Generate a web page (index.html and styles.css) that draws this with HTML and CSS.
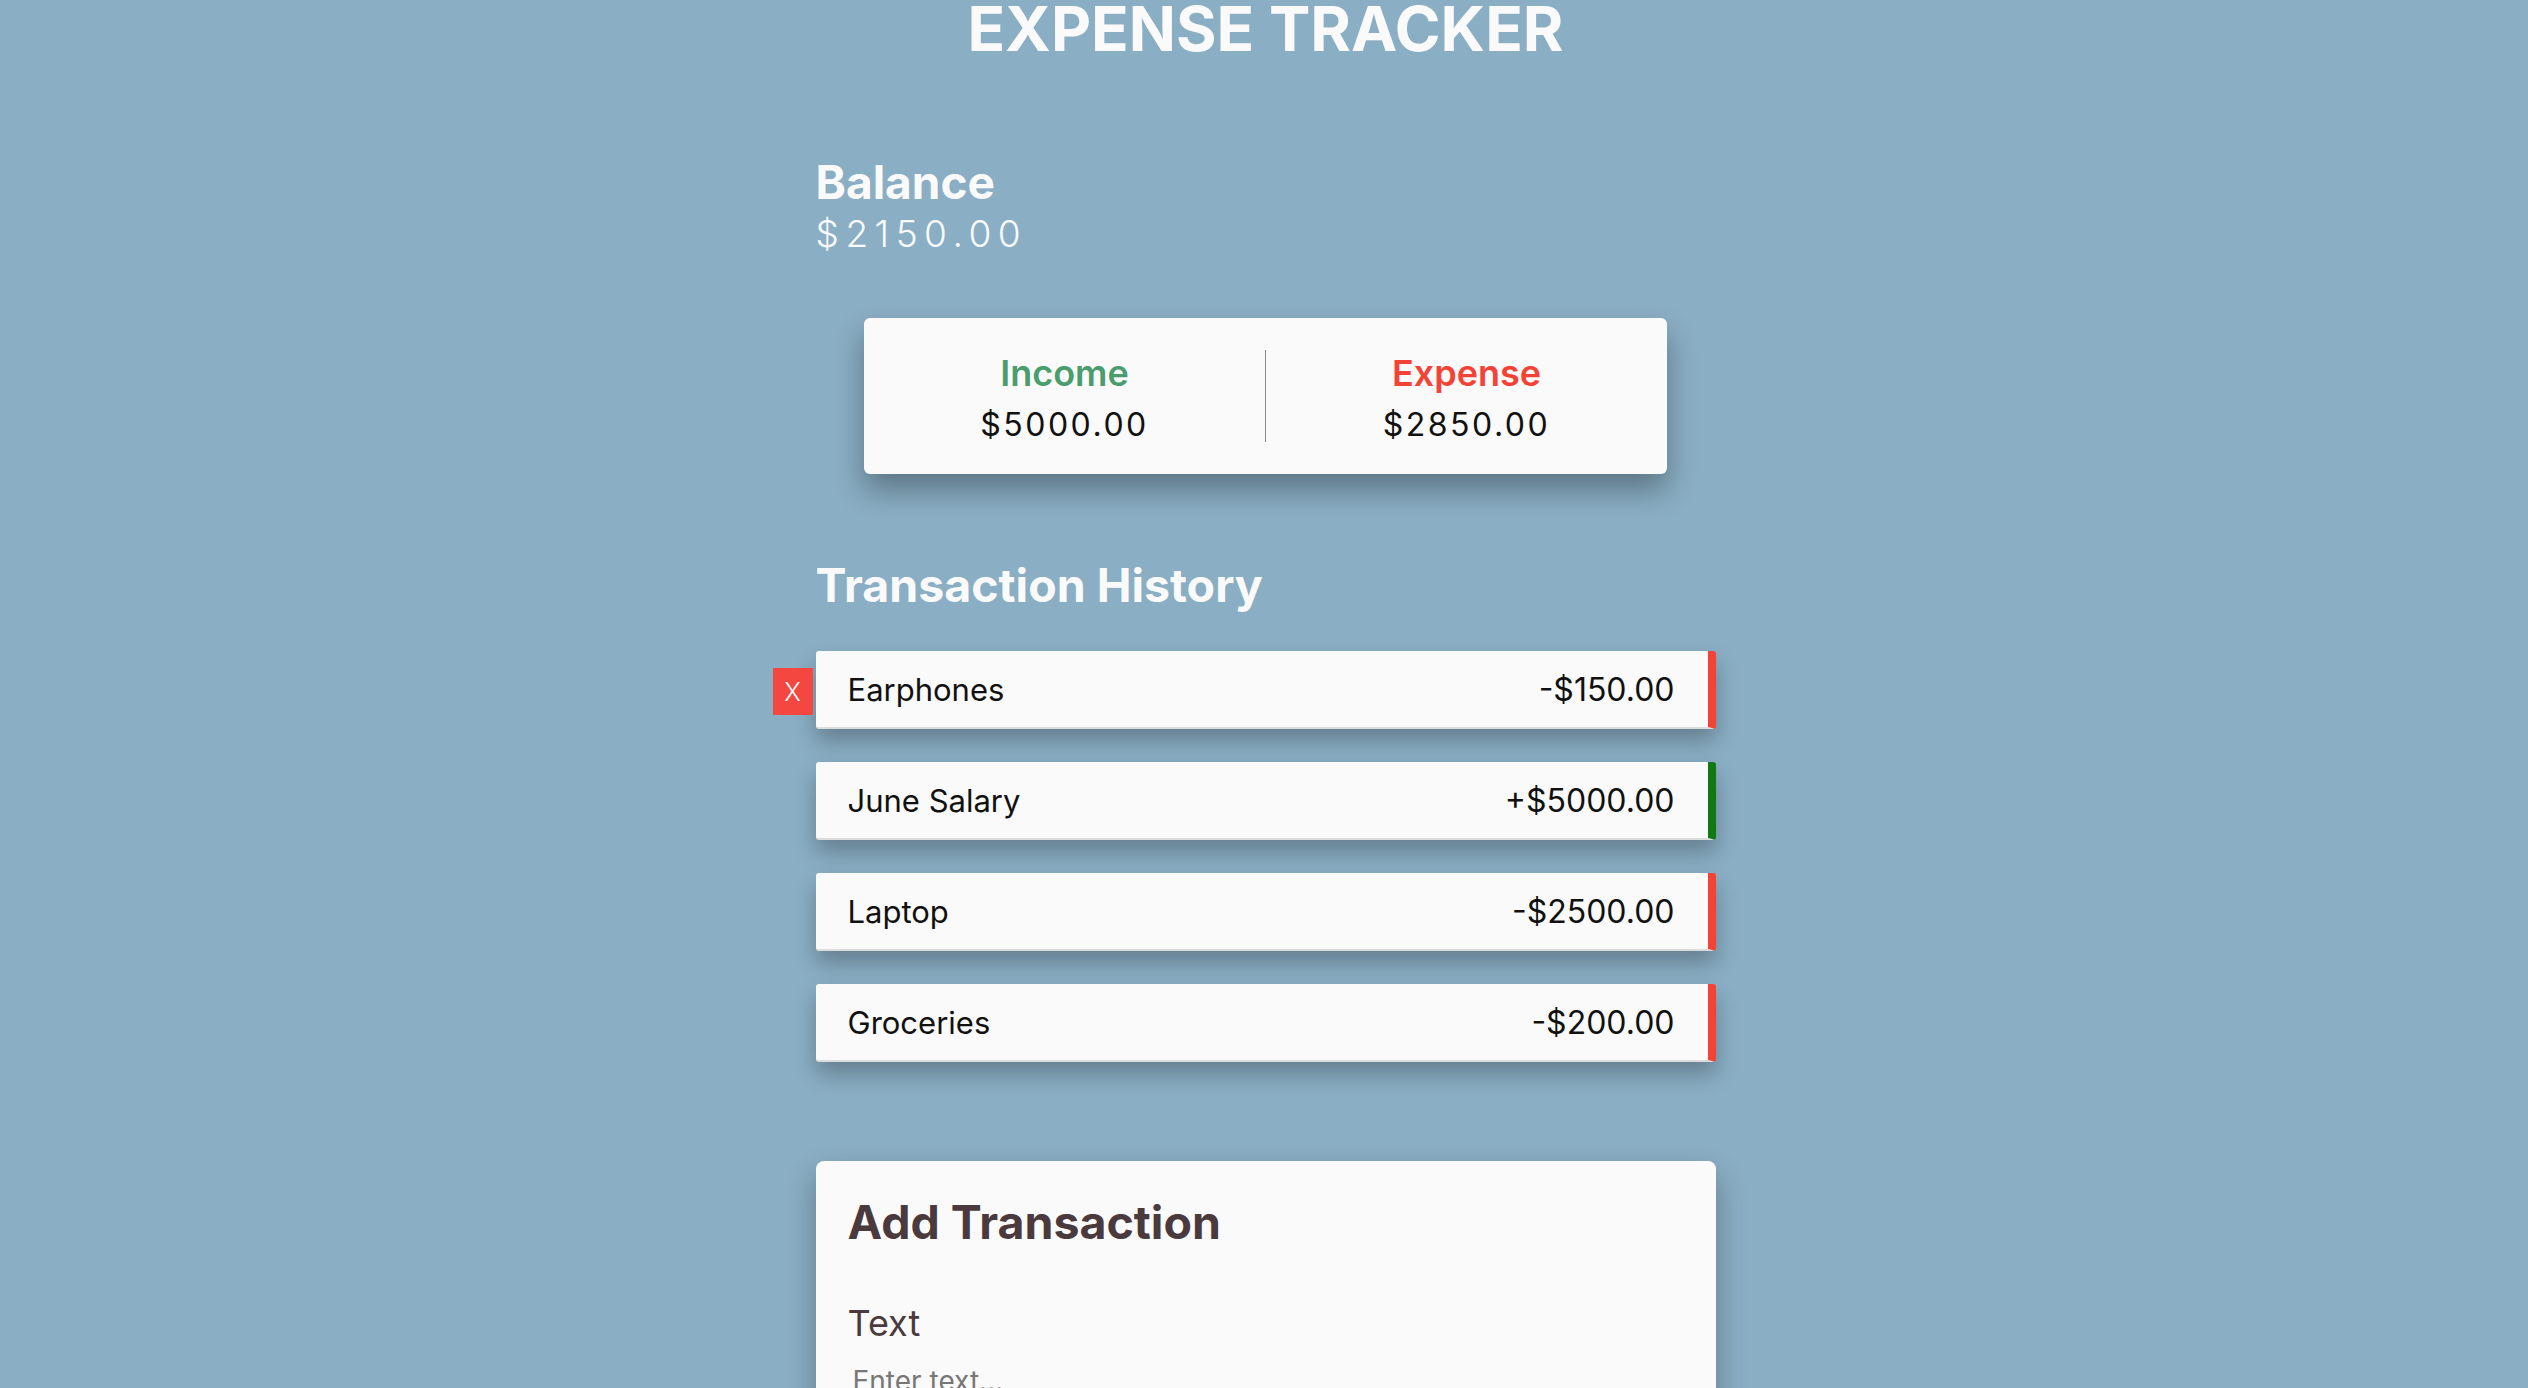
FILE: index.html
```html
<!DOCTYPE html>
<html lang="en">
<head>
<meta charset="utf-8">
<title>Expense Tracker</title>
<link rel="stylesheet" href="styles.css">
</head>
<body>
  <h1 class="title">EXPENSE TRACKER</h1>
  <div class="container">
    <h4 class="balance-label">Balance</h4>
    <p class="balance-amount">$2150.00</p>

    <div class="summary">
      <div class="summary-col">
        <h4 class="summary-label income">Income</h4>
        <p class="summary-value">$5000.00</p>
      </div>
      <div class="summary-col divided">
        <h4 class="summary-label expense">Expense</h4>
        <p class="summary-value">$2850.00</p>
      </div>
    </div>

    <h3 class="section-title">Transaction History</h3>
    <ul class="list">
      <li class="item minus">
        <button class="delete-btn">X</button>
        <span class="item-name">Earphones</span>
        <span class="item-amount">-$150.00</span>
      </li>
      <li class="item plus">
        <span class="item-name">June Salary</span>
        <span class="item-amount">+$5000.00</span>
      </li>
      <li class="item minus">
        <span class="item-name">Laptop</span>
        <span class="item-amount">-$2500.00</span>
      </li>
      <li class="item minus">
        <span class="item-name">Groceries</span>
        <span class="item-amount">-$200.00</span>
      </li>
    </ul>

    <form class="form-card">
      <h3 class="form-title">Add Transaction</h3>
      <label class="form-label" for="text">Text</label>
      <input class="form-input" id="text" type="text" placeholder="Enter text...">
    </form>
  </div>
</body>
</html>
```

FILE: styles.css
```css
* {
  box-sizing: border-box;
}

body {
  margin: 0;
  padding-left: 3px;
  background: #8aaec4;
  font-family: Inter, "Noto Sans", sans-serif;
  color: #fafafa;
  overflow: hidden;
}

.title {
  margin: 3px 0 0;
  font-size: 62px;
  line-height: 0.85;
  font-weight: 700;
  text-align: center;
  color: #fafafa;
}

.container {
  width: 900px;
  margin: 0 auto;
}

.balance-label {
  margin: 103px 0 0;
  font-size: 46px;
  line-height: 1;
  font-weight: 700;
}

.balance-amount {
  margin: 10px 0 0;
  font-size: 37px;
  line-height: 1;
  font-weight: 300;
  letter-spacing: 6.5px;
}

.summary {
  width: 803px;
  margin: 66px auto 0;
  padding: 32px 0;
  background: #fafafa;
  border-radius: 6px;
  display: flex;
  box-shadow: 0 16px 30px rgba(0, 0, 0, 0.33);
}

.summary-col {
  flex: 1;
  height: 92px;
  padding-top: 5px;
  display: flex;
  flex-direction: column;
  align-items: center;
  justify-content: center;
  gap: 18px;
}

.summary-col.divided {
  border-left: 1px solid #8a8a8a;
}

.summary-label {
  margin: 0;
  font-size: 36px;
  line-height: 1;
  font-weight: 600;
}

.summary-label.income {
  color: #4a9d6c;
}

.summary-label.expense {
  color: #f44336;
}

.summary-value {
  margin: 0;
  font-size: 32px;
  line-height: 1;
  color: #111;
  letter-spacing: 2.5px;
}

.section-title {
  margin: 88px 0 0;
  font-size: 46.5px;
  line-height: 1;
  font-weight: 700;
}

.list {
  list-style: none;
  margin: 43px 0 0;
  padding: 0;
  display: flex;
  flex-direction: column;
  gap: 33px;
}

.item {
  position: relative;
  height: 78px;
  background: #fafafa;
  border-radius: 3px;
  border-bottom: 2px solid #dcdcdc;
  border-right: 8px solid #f44336;
  padding: 0 33px 0 32px;
  display: flex;
  align-items: center;
  justify-content: space-between;
  color: #111;
  font-size: 32px;
  box-shadow: 0 12px 22px rgba(0, 0, 0, 0.27);
}

.item-name {
  font-size: 31px;
}

.item.plus {
  border-right-color: #0f7a12;
}

.delete-btn {
  position: absolute;
  left: -43px;
  top: 17px;
  width: 40px;
  height: 47px;
  border: none;
  padding: 0;
  background: #f44740;
  color: #fff;
  font-family: Inter, "Noto Sans", sans-serif;
  font-size: 25px;
  font-weight: 300;
}

.form-card {
  margin: 99px 0 0;
  padding: 38px 32px 40px;
  background: #fafafa;
  border-radius: 8px;
  box-shadow: 0 14px 30px rgba(0, 0, 0, 0.3);
  min-height: 400px;
}

.form-title {
  margin: 0;
  font-size: 46.5px;
  line-height: 1;
  font-weight: 700;
  color: #4a3a3d;
}

.form-label {
  display: block;
  margin-top: 59px;
  font-size: 36px;
  line-height: 1;
  color: #4a3a3d;
}

.form-input {
  display: block;
  width: 100%;
  margin-top: 19px;
  padding: 4px 5px;
  border: none;
  background: transparent;
  font-family: Inter, "Noto Sans", sans-serif;
  font-size: 28px;
  color: #333;
}

.form-input::placeholder {
  color: #777;
}
```
